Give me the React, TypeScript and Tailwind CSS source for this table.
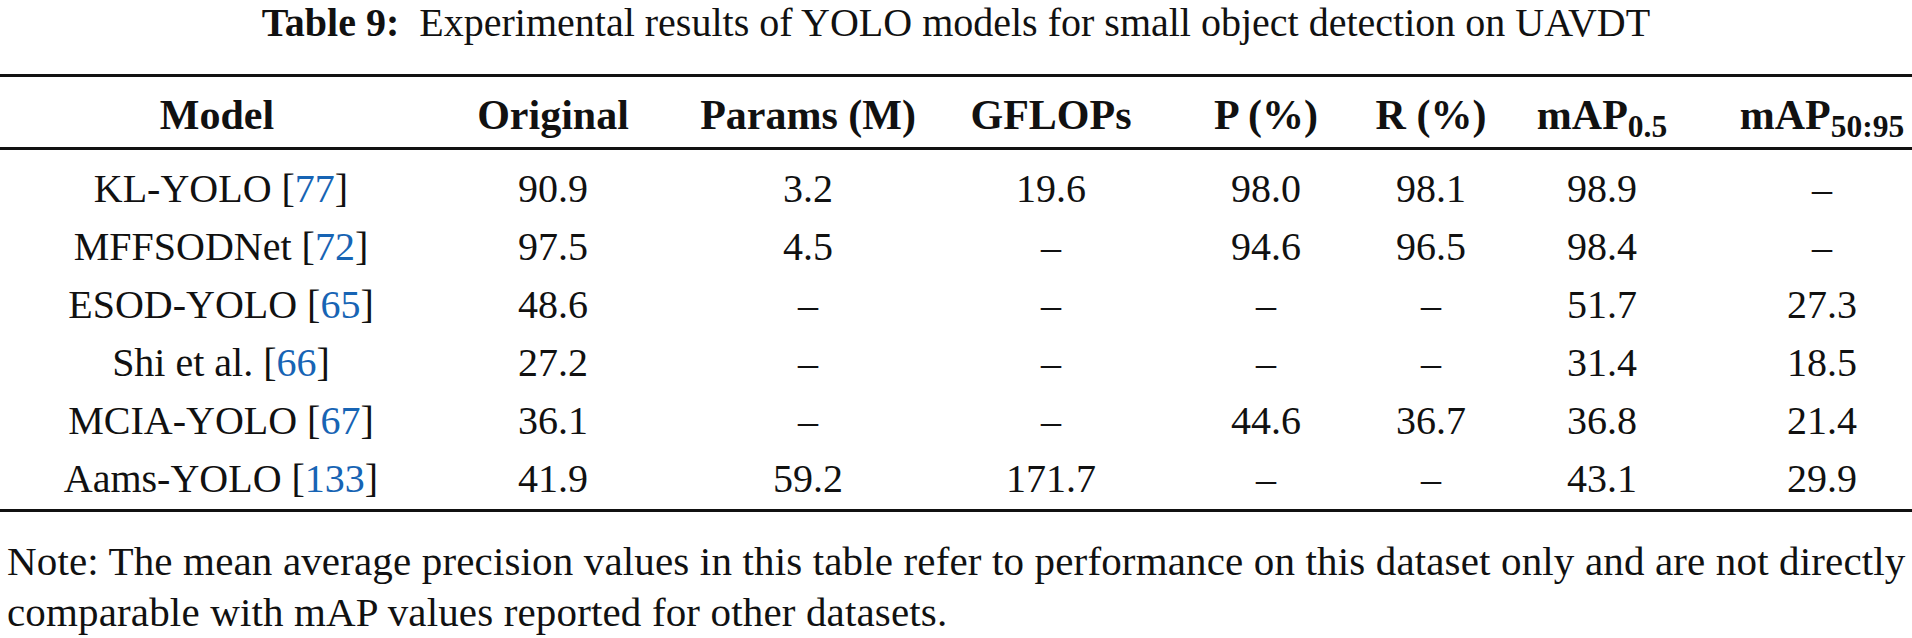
const cols = "grid grid-cols-[434px_238px_272px_214px_216px_114px_228px_196px]";

type Row = { name: string; ref: string; vals: string[] };

const rows: Row[] = [
  { name: "KL-YOLO", ref: "77", vals: ["90.9", "3.2", "19.6", "98.0", "98.1", "98.9", "–"] },
  { name: "MFFSODNet", ref: "72", vals: ["97.5", "4.5", "–", "94.6", "96.5", "98.4", "–"] },
  { name: "ESOD-YOLO", ref: "65", vals: ["48.6", "–", "–", "–", "–", "51.7", "27.3"] },
  { name: "Shi et al.", ref: "66", vals: ["27.2", "–", "–", "–", "–", "31.4", "18.5"] },
  { name: "MCIA-YOLO", ref: "67", vals: ["36.1", "–", "–", "44.6", "36.7", "36.8", "21.4"] },
  { name: "Aams-YOLO", ref: "133", vals: ["41.9", "59.2", "171.7", "–", "–", "43.1", "29.9"] },
];

export default function App() {
  return (
    <div className="w-[1912px] h-[638px] overflow-hidden bg-white text-[#111] font-['Liberation_Serif','Times_New_Roman',serif]">
      <p className="text-center text-[40px] leading-[46px] whitespace-nowrap">
        <span className="font-bold">Table 9:</span>
        {"\u00a0 "}Experimental results of YOLO models for small object detection on UAVDT
      </p>

      <div className="mt-[28px] border-t-[3px] border-b-[3px] border-[#111] pb-[1px]">
        <div className={`${cols} pt-[6px] text-[42px] leading-[64px] font-bold text-center border-b-[3px] border-[#111]`}>
          <div>Model</div>
          <div>Original</div>
          <div>Params (M)</div>
          <div>GFLOPs</div>
          <div>P (%)</div>
          <div>R (%)</div>
          <div>
            mAP<sub>0.5</sub>
          </div>
          <div className="pl-4">
            mAP<sub>50:95</sub>
          </div>
        </div>

        <div className="pt-[10px] text-[40px] leading-[58px] text-center">
          {rows.map((r) => (
            <div key={r.name} className={cols}>
              <div className="whitespace-nowrap pl-[8px]">
                {r.name} [<span className="text-[#1764b4]">{r.ref}</span>]
              </div>
              {r.vals.map((v, i) => (
                <div key={i} className={i === 6 ? "pl-4" : ""}>
                  {v}
                </div>
              ))}
            </div>
          ))}
        </div>
      </div>

      <div className="mt-[24px] text-[41px] leading-[51px] tracking-[0.15px] pl-[7px]">
        <p className="whitespace-nowrap">
          Note: The mean average precision values in this table refer to performance on this dataset only and are not directly
        </p>
        <p className="whitespace-nowrap">comparable with mAP values reported for other datasets.</p>
      </div>
    </div>
  );
}
